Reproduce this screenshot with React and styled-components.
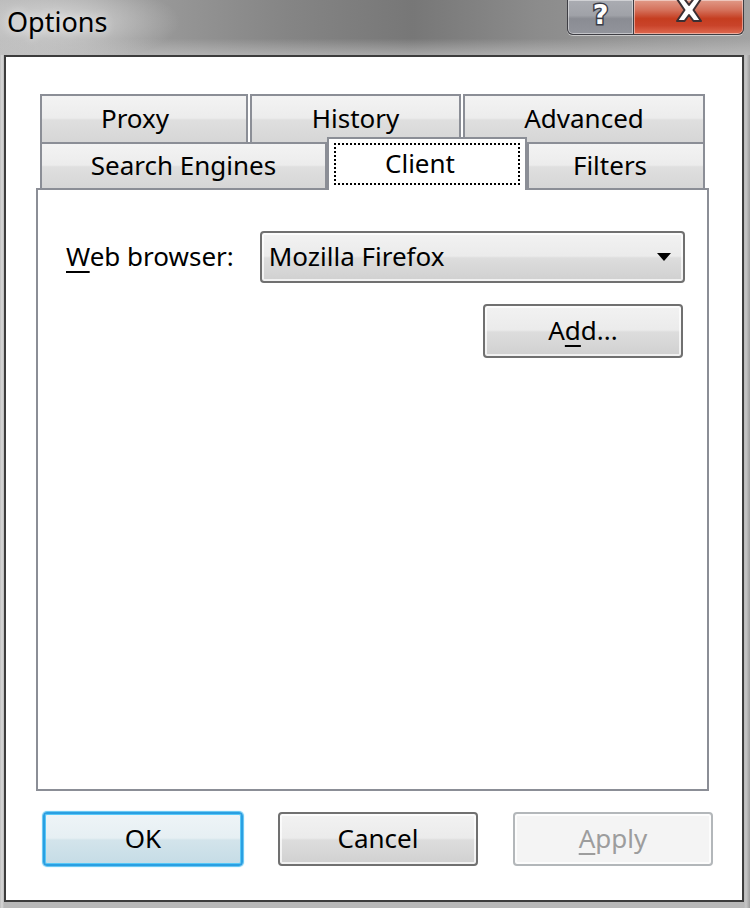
import React from "react"
import styled, { createGlobalStyle } from "styled-components"

const FONT = `"Noto Sans", "Open Sans", sans-serif`

const GlobalStyle = createGlobalStyle`
  html, body {
    margin: 0;
    padding: 0;
  }
  body {
    width: 750px;
    height: 908px;
    overflow: hidden;
    background: #b4b4b4;
  }
`;

const Window = styled.div`
  width: 750px;
  height: 908px;
  box-sizing: border-box;
  display: flex;
  flex-direction: column;
  font-family: ${FONT};
  background: linear-gradient(to right, #bdbdbd 0px, #d9d9d9 2px, #b8b8b8 4px, #b8b8b8 744px, #c6c6c6 746px, #9c9c9c 750px);
`;

const TitleBar = styled.div`
  height: 55px;
  flex: none;
  display: flex;
  justify-content: space-between;
  align-items: flex-start;
  background:
    radial-gradient(ellipse 120px 40px at 60px 22px, rgba(220,220,220,0.85), rgba(220,220,220,0) 100%),
    linear-gradient(to bottom, rgba(200,200,200,0) 70%, rgba(200,200,200,0.6) 100%),
    linear-gradient(to right, #b4b4b4 0%, #9c9c9c 18%, #858585 38%, #777777 55%, #8c8c8c 72%, #a2a2a2 100%);
`;

const Title = styled.div`
  font-size: 27px;
  line-height: 1;
  color: #000;
  padding: 8px 0 0 7px;
  text-shadow: 0 0 10px rgba(255, 255, 255, 0.8);
`;

const CaptionButtons = styled.div`
  display: flex;
  margin-right: 6px;
  height: 35px;
  box-shadow: 0 1px 0 rgba(255, 255, 255, 0.5);
  border-radius: 0 0 6px 6px;
`;

const CaptionButton = styled.div`
  width: ${props => props.$w}px;
  height: 35px;
  box-sizing: border-box;
  display: flex;
  align-items: flex-start;
  justify-content: center;
  padding-top: 1px;
  border: 1px solid #3e3e44;
  border-top: none;
  box-shadow: inset 0 0 0 1px rgba(255, 255, 255, 0.45);
  background: ${props => props.$red
    ? "linear-gradient(to bottom, #e19a88 0%, #d4705a 30%, #c53d20 55%, #c9432a 75%, #df6a50 100%)"
    : "linear-gradient(to bottom, #aaacb2 0%, #a0a2a8 45%, #8a8c93 55%, #92949b 100%)"};
  border-radius: ${props => props.$red ? "0 0 6px 0" : "0 0 0 6px"};
  border-left-width: ${props => props.$red ? 0 : 1}px;
`;

const HelpGlyph = styled.span`
  font-family: "DejaVu Sans", sans-serif;
  font-weight: bold;
  font-size: 27px;
  line-height: 27px;
  color: #fff;
  -webkit-text-stroke: 3px #3b3d48;
  paint-order: stroke fill;
`;

const TabControl = styled.div`
  margin: 37px 33px 0 30px;
  display: flex;
  flex-direction: column;
`;

const TabRow = styled.div`
  display: flex;
  gap: ${props => props.$gap || 0}px;
  padding: 0 4px;
  height: ${props => props.$h}px;
`;

const Tab = styled.div`
  width: ${props => props.$w}px;
  flex: none;
  box-sizing: border-box;
  border: 2px solid #8b8e96;
  border-bottom: none;
  background: linear-gradient(to bottom, #f3f3f3 0%, #ececec 48%, #dfdfdf 52%, #d6d6d6 100%);
  display: flex;
  align-items: center;
  justify-content: center;
  font-size: 26px;
  color: #000;
  padding: 0 ${props => props.$shift || 0}px 2px 0;
`;

const SelectedTab = styled.div`
  width: ${props => props.$w}px;
  flex: none;
  box-sizing: border-box;
  position: relative;
  z-index: 1;
  margin-top: -5px;
  margin-bottom: -2px;
  border: 2px solid #8b8e96;
  border-bottom: none;
  background: #fff;
  display: flex;
  padding: 4px 5px 5px;
`;

const FocusRect = styled.div`
  flex: 1;
  border: 2px dotted #000;
  display: flex;
  align-items: center;
  justify-content: center;
  font-size: 26px;
  color: #000;
  padding: 0 14px 2px 0;
`;

const Panel = styled.div`
  height: 603px;
  box-sizing: border-box;
  border: 2px solid #8b8e96;
  background: #fff;
  padding: 41px 22px 0 28px;
  display: flex;
  flex-direction: column;
`;

const FieldRow = styled.div`
  display: flex;
  align-items: center;
`;

const Label = styled.label`
  font-size: 26px;
  color: #000;
  margin-right: 26px;
  padding-bottom: 2px;
`;

const Mnemonic = styled.span`
  text-decoration: underline;
  text-decoration-thickness: 2px;
  text-underline-offset: 5px;
`;

const Combo = styled.div`
  flex: 1;
  height: 52px;
  box-sizing: border-box;
  border: 2px solid #707070;
  border-radius: 4px;
  background: linear-gradient(to bottom, #f2f2f2 0%, #ebebeb 48%, #dddddd 52%, #d0d0d0 100%);
  box-shadow: inset 0 0 0 2px rgba(255, 255, 255, 0.7);
  display: flex;
  align-items: center;
  justify-content: space-between;
  padding: 0 12px 2px 7px;
  font-size: 26px;
  color: #000;
`;

const Arrow = styled.span`
  width: 0;
  height: 0;
  border-left: 7px solid transparent;
  border-right: 7px solid transparent;
  border-top: 8px solid #000;
  margin-top: 2px;
`;

const Button = styled.button`
  width: 200px;
  height: 54px;
  flex: none;
  box-sizing: border-box;
  padding: 0 0 2px;
  border-radius: 4px;
  font-family: ${FONT};
  font-size: 26px;
  border: 2px solid ${props => props.$variant === "default" ? "#2a9fe2" : props.$variant === "disabled" ? "#b3b7ba" : "#707070"};
  color: ${props => props.$variant === "disabled" ? "#9d9d9d" : "#000"};
  background: ${props => props.$variant === "default"
    ? "linear-gradient(to bottom, #eef4f7 0%, #e6eff3 48%, #d3e4eb 52%, #c5dce6 100%)"
    : props.$variant === "disabled"
      ? "#f4f4f4"
      : "linear-gradient(to bottom, #f2f2f2 0%, #ebebeb 48%, #dddddd 52%, #d0d0d0 100%)"};
  box-shadow: ${props => props.$variant === "default"
    ? "inset 0 0 0 1px #57c8f7, 0 0 1px 1px #5cc4f2"
    : "inset 0 0 0 2px rgba(255, 255, 255, 0.7)"};
`;

const AddButton = styled(Button)`
  align-self: flex-end;
  margin-top: 21px;
  margin-right: 2px;
`;

const ButtonRow = styled.div`
  display: flex;
  gap: 35px;
  margin: 21px 0 0 37px;
`;

const Client = styled.div`
  flex: 1;
  margin: 0 6px 6px 4px;
  border: 2px solid #3c3c3c;
  background: #fff;
  display: flex;
  flex-direction: column;
`;

const CloseIcon = () => (
  <svg width="30" height="24" viewBox="0 0 30 24" style={{ marginTop: "-3px" }}>
    <path
      d="M3 1 H10.5 L15 7 L19.5 1 H27 L19.5 12 L27 23 H19.5 L15 17 L10.5 23 H3 L10.5 12 Z"
      fill="#fff"
      stroke="#3b2f33"
      strokeWidth="2"
      strokeLinejoin="round"
    />
  </svg>
)

export default function App() {
  return (
    <Window>
      <GlobalStyle />
      <TitleBar>
        <Title>Options</Title>
        <CaptionButtons>
          <CaptionButton $w={67}><HelpGlyph>?</HelpGlyph></CaptionButton>
          <CaptionButton $w={110} $red><CloseIcon /></CaptionButton>
        </CaptionButtons>
      </TitleBar>
      <Client>
        <TabControl>
          <TabRow $h={48} $gap={2}>
            <Tab $w={208} $shift={18}>Proxy</Tab>
            <Tab $w={211}>History</Tab>
            <Tab $w={242}>Advanced</Tab>
          </TabRow>
          <TabRow $h={46}>
            <Tab $w={287}>Search Engines</Tab>
            <SelectedTab $w={200}><FocusRect>Client</FocusRect></SelectedTab>
            <Tab $w={178} $shift={12}>Filters</Tab>
          </TabRow>
          <Panel>
            <FieldRow>
              <Label><Mnemonic>W</Mnemonic>eb browser:</Label>
              <Combo>
                <span>Mozilla Firefox</span>
                <Arrow />
              </Combo>
            </FieldRow>
            <AddButton>A<Mnemonic>d</Mnemonic>d...</AddButton>
          </Panel>
        </TabControl>
        <ButtonRow>
          <Button $variant="default">OK</Button>
          <Button>Cancel</Button>
          <Button $variant="disabled"><Mnemonic>A</Mnemonic>pply</Button>
        </ButtonRow>
      </Client>
    </Window>
  )
}
